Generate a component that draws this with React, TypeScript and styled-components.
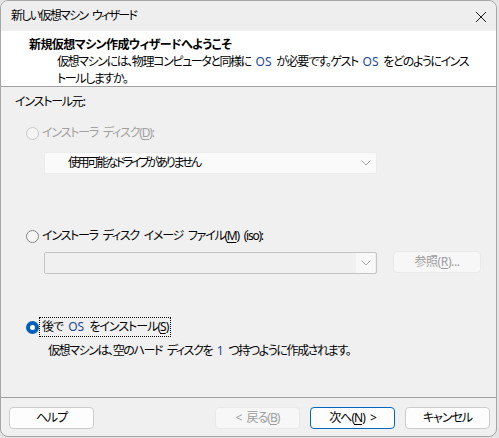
import React from "react";
import styled, { createGlobalStyle, css } from "styled-components";

const Global = createGlobalStyle`
  html, body { margin: 0; padding: 0; background: #e4e4e4; }
  body {
    font-family: "Noto Sans", "Noto Sans CJK JP", sans-serif;
    font-size: 12px;
    color: #000;
    font-feature-settings: "palt";
    word-spacing: 3px;
  }
`;

const Window = styled.div`
  width: 497px;
  height: 437px;
  box-sizing: border-box;
  border: 1px solid #a6a6a6;
  border-radius: 8px;
  overflow: hidden;
  background: #f0f0f0;
  display: flex;
  flex-direction: column;
`;

const TitleBar = styled.div`
  height: 30px;
  flex: none;
  display: flex;
  align-items: center;
  justify-content: space-between;
  padding: 0 9px 0 10px;
  background: #eeeeee;
  line-height: 16px;
  letter-spacing: -1.7px;
`;

const CloseBtn = styled.span`
  display: flex;
  width: 12px;
  height: 12px;
  margin-top: 2px;
`;

const Header = styled.div`
  height: 56px;
  flex: none;
  box-sizing: border-box;
  background: #ffffff;
  border-bottom: 1px solid #a0a0a0;
  padding: 6px 0 0 28px;
  line-height: 16px;
  white-space: nowrap;
`;

const HeaderTitle = styled.div`
  font-weight: 700;
  letter-spacing: -0.6px;
`;

const HeaderDesc = styled.div`
  margin-left: 28px;
  line-height: 17px;
  letter-spacing: -1.4px;
`;

const Blue = styled.span`
  color: #1f4896;
  letter-spacing: 0;
`;

const Body = styled.div`
  flex: 1;
  display: flex;
  flex-direction: column;
  padding: 7px 0 0 14px;
  line-height: 16px;
  white-space: nowrap;
`;

const Caption = styled.div`
  letter-spacing: -1.2px;
`;

const RadioRow = styled.div<{ $top: number; $disabled?: boolean }>`
  display: flex;
  align-items: center;
  margin-top: ${(p) => p.$top}px;
  margin-left: 11px;
  height: 16px;
  color: ${(p) => (p.$disabled ? "#a0a0a0" : "#000")};
`;

const Radio = styled.span<{ $checked?: boolean; $disabled?: boolean }>`
  width: 13px;
  height: 13px;
  box-sizing: border-box;
  border-radius: 50%;
  flex: none;
  margin-right: 2px;
  ${(p) =>
    p.$checked
      ? css`
          border: 4px solid #005fb8;
          background: #ffffff;
        `
      : css`
          border: 1px solid ${p.$disabled ? "#c9c9c9" : "#858585"};
          background: ${p.$disabled ? "#f4f4f4" : "#f7f7f7"};
        `}
`;

const Label = styled.span<{ $focus?: boolean; $ls: number }>`
  padding: 0 1px;
  letter-spacing: ${(p) => p.$ls}px;
  ${(p) =>
    p.$focus &&
    css`
      outline: 1px dotted #000;
      outline-offset: 1px;
    `}
`;

const U = styled.span`
  text-decoration: underline;
  text-underline-offset: 2px;
`;

const Select = styled.div<{ $variant: "flat" | "boxed" }>`
  margin-left: 29px;
  width: 333px;
  height: 22px;
  box-sizing: border-box;
  display: flex;
  align-items: center;
  ${(p) =>
    p.$variant === "flat"
      ? css`
          margin-top: 11px;
          background: #fafafa;
          border: 1px solid #ececec;
          border-radius: 2px;
        `
      : css`
          margin-top: 8px;
          background: #f0f0f0;
          border: 1px solid #c3c3c3;
          border-radius: 2px;
        `}
`;

const SelectText = styled.span`
  flex: 1;
  padding-left: 23px;
  letter-spacing: -2.4px;
`;

const SelectField = styled.span`
  flex: 1;
  align-self: stretch;
  background: #f0f0f0;
`;

const ArrowBox = styled.span<{ $sep?: boolean }>`
  width: 19px;
  align-self: stretch;
  display: flex;
  align-items: center;
  justify-content: center;
  background: ${(p) => (p.$sep ? "#f8f8f8" : "transparent")};
  margin-right: 1px;
`;

const ComboRow = styled.div`
  display: flex;
  align-items: flex-start;
  gap: 16px;
`;

const Button = styled.button<{ $variant?: "default" | "primary" | "disabled" }>`
  width: 85px;
  height: 22px;
  box-sizing: border-box;
  border-radius: 4px;
  font-family: inherit;
  font-size: 12px;
  font-feature-settings: "palt";
  letter-spacing: -1px;
  word-spacing: 3px;
  line-height: 16px;
  padding: 0;
  display: flex;
  align-items: center;
  justify-content: center;
  white-space: pre;
  ${(p) =>
    p.$variant === "primary"
      ? css`
          background: #fdfdfd;
          border: 1px solid #0067c0;
          color: #000;
        `
      : p.$variant === "disabled"
      ? css`
          background: #f7f7f7;
          border: 1px solid #e9e9e9;
          color: #9c9c9c;
        `
      : css`
          background: #fdfdfd;
          border: 1px solid #cccccc;
          color: #000;
        `}
`;

const BrowseBtn = styled(Button)`
  margin-top: 7px;
  width: 88px;
  height: 22px;
  letter-spacing: -0.4px;
`;

const Note = styled.div`
  margin-top: 8px;
  margin-left: 33px;
  letter-spacing: -1.4px;
`;

const Footer = styled.div`
  height: 39px;
  flex: none;
  box-sizing: border-box;
  border-top: 1px solid #a0a0a0;
  display: flex;
  justify-content: space-between;
  padding: 9px 6px 0 8px;
`;

const ButtonGroup = styled.div`
  display: flex;
  gap: 10px;
`;

const Chevron = () => (
  <svg width="10" height="6" viewBox="0 0 10 6">
    <path d="M0.5 0.5 L5 5 L9.5 0.5" fill="none" stroke="#a8a8a8" strokeWidth="1" />
  </svg>
);

export default function App() {
  return (
    <>
      <Global />
      <Window>
        <TitleBar>
          <span>新しい仮想マシン ウィザード</span>
          <CloseBtn>
            <svg width="12" height="12" viewBox="0 0 12 12">
              <path d="M1 1 L11 11 M11 1 L1 11" stroke="#1a1a1a" strokeWidth="1" />
            </svg>
          </CloseBtn>
        </TitleBar>
        <Header>
          <HeaderTitle>新規仮想マシン作成ウィザードへようこそ</HeaderTitle>
          <HeaderDesc>
            仮想マシンには、物理コンピュータと同様に <Blue>OS</Blue> が必要です。ゲスト <Blue>OS</Blue> をどのようにインス
            <br />
            トールしますか。
          </HeaderDesc>
        </Header>
        <Body>
          <Caption>インストール元:</Caption>
          <RadioRow $top={15} $disabled>
            <Radio $disabled />
            <Label $ls={-1.2}>
              インストーラ ディスク(<U>D</U>):
            </Label>
          </RadioRow>
          <Select $variant="flat">
            <SelectText>使用可能なドライブがありません</SelectText>
            <ArrowBox>
              <Chevron />
            </ArrowBox>
          </Select>
          <RadioRow $top={54}>
            <Radio />
            <Label $ls={-1.25}>
              インストーラ ディスク イメージ ファイル(<U>M</U>) (iso):
            </Label>
          </RadioRow>
          <ComboRow>
            <Select $variant="boxed">
              <SelectField />
              <ArrowBox $sep>
                <Chevron />
              </ArrowBox>
            </Select>
            <BrowseBtn $variant="disabled">
              参照(<U>R</U>)...
            </BrowseBtn>
          </ComboRow>
          <RadioRow $top={45}>
            <Radio $checked />
            <Label $focus $ls={-1.0}>
              後で <Blue>OS</Blue> をインストール(<U>S</U>)
            </Label>
          </RadioRow>
          <Note>
            仮想マシンは、空のハード ディスクを <Blue>1</Blue> つ持つように作成されます。
          </Note>
        </Body>
        <Footer>
          <Button>ヘルプ</Button>
          <ButtonGroup>
            <Button $variant="disabled">
              &lt; 戻る(<U>B</U>)
            </Button>
            <Button $variant="primary">
              次へ(<U>N</U>) &gt;
            </Button>
            <Button>キャンセル</Button>
          </ButtonGroup>
        </Footer>
      </Window>
    </>
  );
}
